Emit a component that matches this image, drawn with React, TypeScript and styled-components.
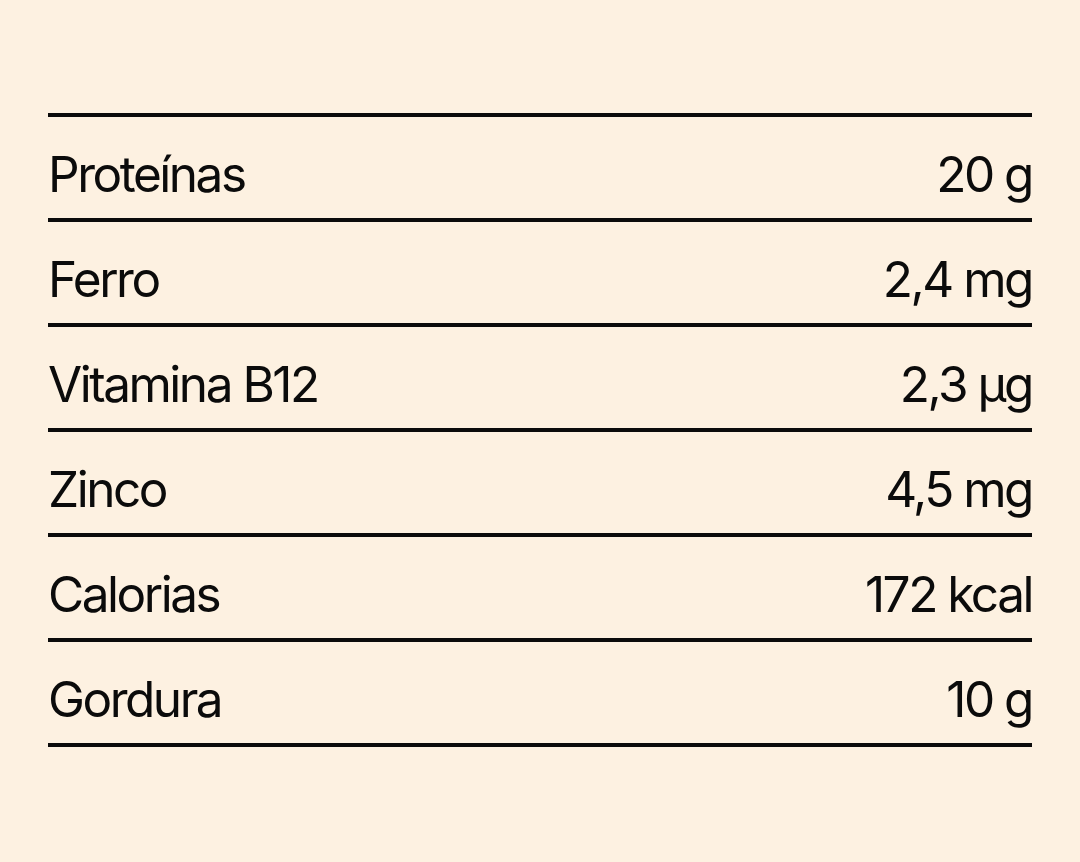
import React from "react";
import styled, { createGlobalStyle } from "styled-components";

const GlobalStyle = createGlobalStyle`
  html, body {
    margin: 0;
    padding: 0;
    background: #fdf1e1;
  }
  body {
    font-family: Inter, "Noto Sans", sans-serif;
    color: #0b0b0b;
  }
`;

const Page = styled.main`
  width: 1080px;
  height: 862px;
  box-sizing: border-box;
  padding: 113px 48px 0;
  background: #fdf1e1;
`;

const Table = styled.div`
  display: flex;
  flex-direction: column;
  border-bottom: 4px solid #0b0b0b;
`;

const Row = styled.div`
  display: flex;
  justify-content: space-between;
  align-items: flex-start;
  height: 101px;
  border-top: 4px solid #0b0b0b;
  box-sizing: content-box;
`;

const Cell = styled.span<{ $align?: "left" | "right" }>`
  display: block;
  padding-top: 27px;
  font-size: 49.5px;
  line-height: 60px;
  letter-spacing: -0.05em;
  font-weight: 400;
  text-align: ${(p) => p.$align ?? "left"};
  white-space: nowrap;
`;

const rows: [string, string][] = [
  ["Proteínas", "20 g"],
  ["Ferro", "2,4 mg"],
  ["Vitamina B12", "2,3 µg"],
  ["Zinco", "4,5 mg"],
  ["Calorias", "172 kcal"],
  ["Gordura", "10 g"],
];

export default function App() {
  return (
    <>
      <GlobalStyle />
      <Page>
        <Table>
          {rows.map(([label, value]) => (
            <Row key={label}>
              <Cell>{label}</Cell>
              <Cell $align="right">{value}</Cell>
            </Row>
          ))}
        </Table>
      </Page>
    </>
  );
}
